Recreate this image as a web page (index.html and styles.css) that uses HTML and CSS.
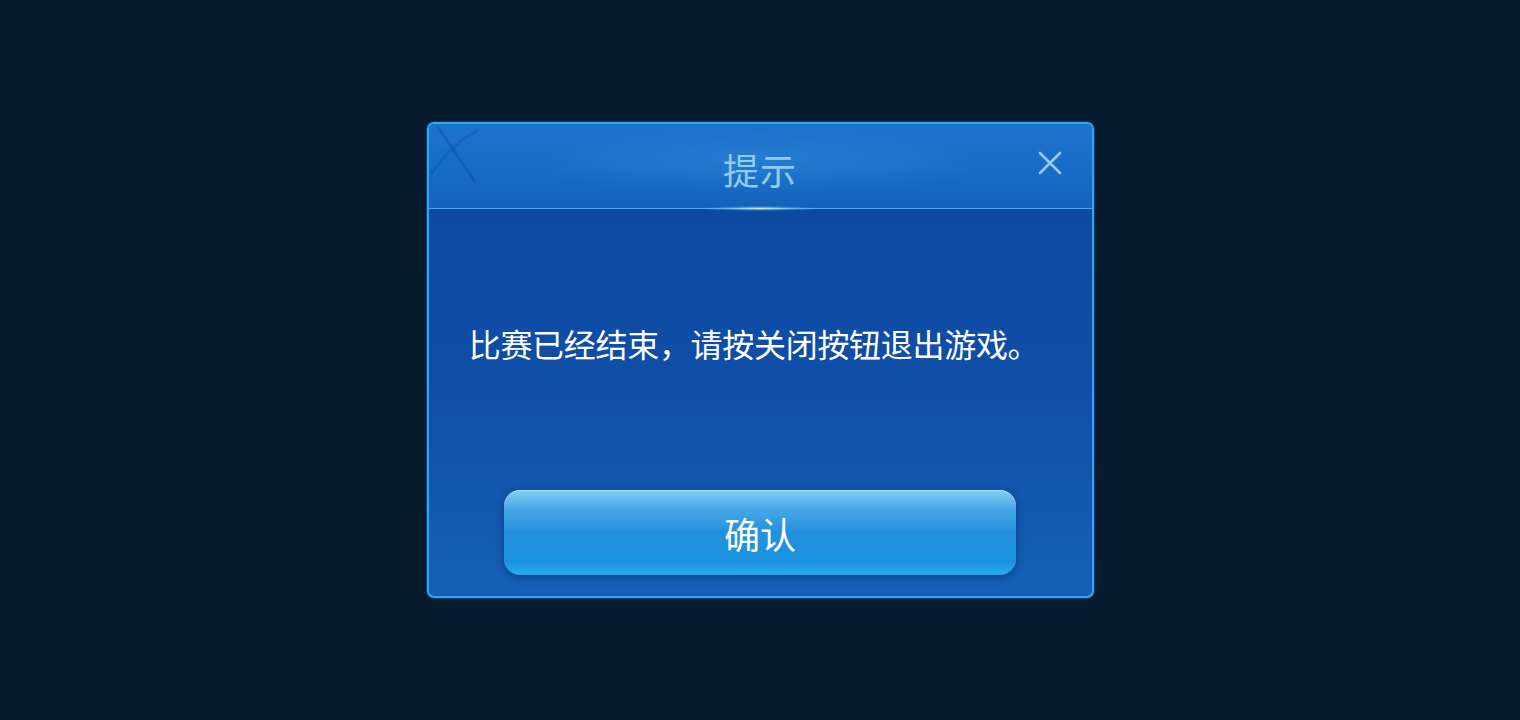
FILE: index.html
```html
<!DOCTYPE html>
<html lang="zh-CN">
<head>
  <meta charset="UTF-8">
  <meta name="viewport" content="width=device-width, initial-scale=1">
  <title>提示</title>
  <link rel="stylesheet" href="styles.css">
</head>
<body>
  <div class="dialog">
    <div class="dialog-head">
      <svg class="corner-mark" width="60" height="60" viewBox="0 0 60 60">
        <path d="M8 2 Q22 22 46 58" stroke="rgba(10,60,140,0.3)" stroke-width="3" fill="none"/>
        <path d="M50 6 Q24 18 2 50" stroke="rgba(10,60,140,0.22)" stroke-width="3" fill="none"/>
      </svg>
      <h1 class="title">提示</h1>
      <button class="close" aria-label="关闭">
        <svg width="24" height="24" viewBox="0 0 24 24">
          <path d="M2 2 L22 22 M22 2 L2 22" stroke="#9cc8ee" stroke-width="2.6" stroke-linecap="round" fill="none"/>
        </svg>
      </button>
    </div>
    <div class="dialog-body">
      <p class="message">比赛已经结束，请按关闭按钮退出游戏。</p>
      <button class="confirm">确认</button>
    </div>
  </div>
</body>
</html>
```

FILE: styles.css
```css
body {
  margin: 0;
  height: 100vh;
  background: #081a2d;
  font-family: "Noto Sans CJK SC", "Noto Sans", sans-serif;
  display: flex;
  align-items: center;
  justify-content: center;
}

.dialog {
  width: 663px;
  height: 472px;
  border: 2px solid #33a6f2;
  border-radius: 7px;
  overflow: hidden;
  display: flex;
  flex-direction: column;
  background: linear-gradient(180deg, #0d469e 0%, #0f4ea8 55%, #1560b6 100%);
  box-shadow: 0 0 0 1px #0b3c78;
}

.dialog-head {
  position: relative;
  height: 84px;
  display: grid;
  grid-template-columns: 1fr auto 1fr;
  align-items: center;
  background:
    radial-gradient(ellipse 50% 55% at 50% 45%, rgba(70, 160, 230, 0.3), transparent 70%),
    linear-gradient(180deg, #1c74ce 0%, #176ac5 60%, #1462bc 100%);
  border-bottom: 1px solid #4aaaf0;
}

/* glow in the middle of the divider line */
.dialog-head::after {
  content: "";
  position: absolute;
  left: 50%;
  bottom: -3px;
  width: 120px;
  height: 5px;
  margin-left: -60px;
  border-radius: 50%;
  background: radial-gradient(ellipse at center, rgba(220, 240, 255, 0.95), rgba(120, 200, 255, 0.4) 40%, transparent 75%);
}

.corner-mark {
  position: absolute;
  left: 0;
  top: 0;
}

.title {
  grid-column: 2;
  margin: 6px 0 0;
  font-size: 36px;
  font-weight: 400;
  color: #8fcbf3;
  letter-spacing: 1px;
}

.close {
  grid-column: 3;
  justify-self: end;
  margin: -6px 30px 0 0;
  padding: 0;
  width: 24px;
  height: 24px;
  border: none;
  background: none;
  cursor: pointer;
}

.dialog-body {
  flex: 1;
  display: flex;
  flex-direction: column;
  align-items: center;
  padding-bottom: 21px;
}

.message {
  flex: 1;
  display: flex;
  align-items: center;
  margin: 0;
  padding: 0 12px 14px 0;
  font-size: 32px;
  letter-spacing: -0.3px;
  color: #ffffff;
}

.confirm {
  width: 512px;
  height: 85px;
  border: none;
  border-radius: 16px;
  font-family: inherit;
  font-size: 36px;
  color: #ffffff;
  cursor: pointer;
  background: linear-gradient(180deg, #7fd0f5 0%, #4aa8e6 22%, #2490dc 50%, #1a94e0 85%, #2aabf0 100%);
  box-shadow: 0 2px 8px rgba(5, 30, 80, 0.45), inset 0 1px 0 rgba(200, 240, 255, 0.6);
}

.confirm:hover {
  background: linear-gradient(180deg, #8ad8f8 0%, #55b2ea 22%, #2b98e0 50%, #22a0e6 100%);
}
```
